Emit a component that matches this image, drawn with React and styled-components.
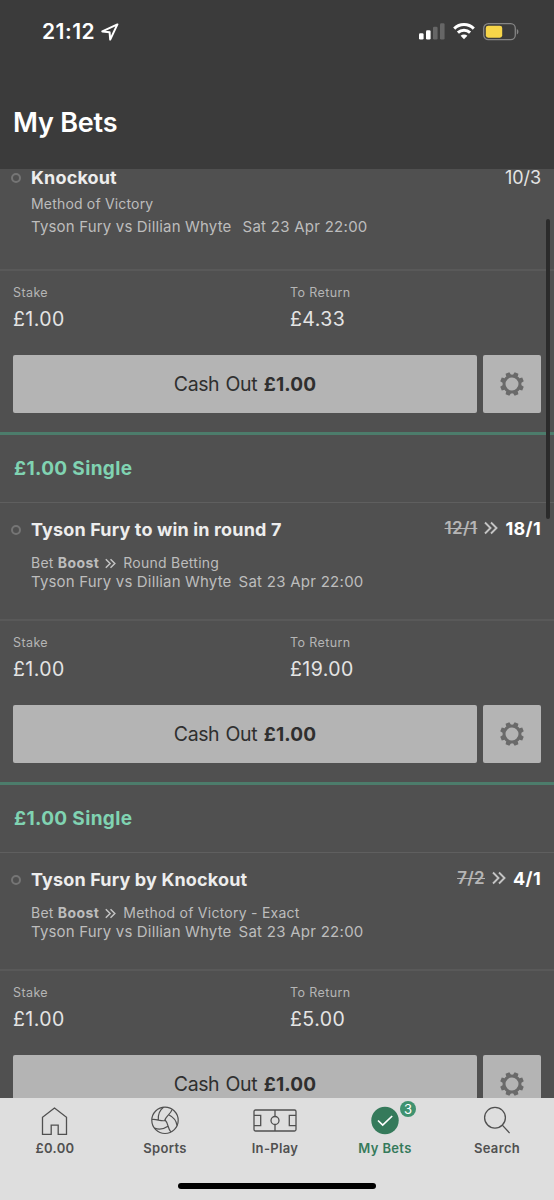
import React from 'react'
import styled, { createGlobalStyle } from 'styled-components'

const GlobalStyle = createGlobalStyle`
  * {
    box-sizing: border-box;
  }
  body {
    margin: 0;
    background: #505050;
    font-family: Inter, 'Liberation Sans', sans-serif;
  }
  button {
    font-family: inherit;
    border: none;
    padding: 0;
  }
`

const Screen = styled.div`
  position: relative;
  display: flex;
  flex-direction: column;
  width: 554px;
  height: 1200px;
  overflow: hidden;
`

const Header = styled.header`
  flex: none;
  height: 169px;
  background: #3b3b3b;
  color: #fff;
`

const StatusBar = styled.div`
  display: flex;
  align-items: center;
  justify-content: space-between;
  height: 63px;
  padding: 0 35px 0 42px;
`

const Clock = styled.div`
  display: flex;
  align-items: center;
  gap: 6px;
  font-size: 21px;
  font-weight: 600;
  letter-spacing: 0.5px;
`

const StatusIcons = styled.div`
  display: flex;
  align-items: center;
  gap: 8px;
`

const PageTitle = styled.h1`
  margin: 43px 0 0 13px;
  font-size: 27px;
  line-height: 34px;
  font-weight: 600;
  letter-spacing: -0.2px;
`

const BetList = styled.main`
  flex: 1;
  min-height: 0;
  overflow: hidden;
  background: #505050;
`

const Card = styled.section`
  padding-bottom: 19px;
  border-bottom: 3px solid #4c7c6b;
`

const CardTitle = styled.h2`
  margin: 0;
  height: 68px;
  padding-left: 14px;
  border-bottom: 1px solid #5f5f5f;
  color: #80d3b2;
  font-size: 19px;
  line-height: 67px;
  font-weight: 650;
  letter-spacing: 0.35px;
`

const Selection = styled.div`
  display: flex;
  height: ${(p) => (p.$clipped ? 102 : 118)}px;
  padding: ${(p) => (p.$clipped ? '0' : '18px')} 13px 0 11px;
  border-bottom: 2px solid #595959;
`

const Bullet = styled.span`
  flex: none;
  width: 10px;
  height: 10px;
  margin: 4px 10px 0 0;
  border: 2px solid #757575;
  border-radius: 50%;
`

const Details = styled.div`
  flex: 1;
  color: #bdbdbd;
`

const Name = styled.div`
  color: #ededed;
  font-size: 18px;
  line-height: 18px;
  font-weight: 680;
  letter-spacing: 0.15px;
`

const Market = styled.div`
  display: flex;
  align-items: center;
  margin-top: ${(p) => (p.$clipped ? 7 : 14)}px;
  font-size: 14px;
  line-height: 20px;
  letter-spacing: ${(p) => (p.$clipped ? 0.18 : 0.25)}px;
  white-space: pre;

  svg {
    margin: 0 7px 0 6px;
  }

  b {
    letter-spacing: 0.4px;
  }
`

const Fixture = styled.div`
  display: flex;
  gap: ${(p) => (p.$clipped ? 11 : 7)}px;
  margin-top: ${(p) => (p.$clipped ? 3 : -1)}px;
  font-size: 15px;
  line-height: 20px;
  letter-spacing: 0.17px;

  span + span {
    letter-spacing: 0.27px;
  }
`

const Odds = styled.div`
  display: flex;
  align-items: center;
  height: 18px;
  margin-top: ${(p) => (p.$boosted ? -2 : -1)}px;
  gap: 7px;
  color: ${(p) => (p.$boosted ? '#fff' : '#e4e4e4')};
  font-size: 18px;
  font-weight: ${(p) => (p.$boosted ? 700 : 400)};
  letter-spacing: ${(p) => (p.$boosted ? 0.35 : -0.1)}px;
`

const OldOdds = styled.s`
  color: #b5b5b5;
  font-size: 17px;
  font-weight: 600;
  text-decoration-thickness: 1px;
`

const Totals = styled.dl`
  display: grid;
  grid-template-columns: 1fr 1fr;
  height: 84px;
  margin: 0;
  padding: 13px 0 0 13px;
  column-gap: 13px;
`

const Label = styled.dt`
  color: #b5b5b5;
  font-size: 12.5px;
  line-height: 18px;
  letter-spacing: 0.4px;
`

const Amount = styled.dd`
  margin: 6px 0 0;
  color: #e4e4e4;
  font-size: 19.5px;
  line-height: 22px;
  letter-spacing: 0.45px;
`

const Actions = styled.div`
  display: flex;
  gap: 6px;
  padding: 0 13px;
`

const CashOut = styled.button`
  flex: 1;
  height: 58px;
  border-radius: 2px;
  background: #b4b4b4;
  color: #2f2f2f;
  font-size: 19.5px;
  letter-spacing: -0.45px;
  word-spacing: 1.5px;

  b {
    font-size: 19px;
    font-weight: 680;
    letter-spacing: 0.15px;
  }
`

const Settings = styled.button`
  display: grid;
  place-items: center;
  width: 58px;
  height: 58px;
  border-radius: 2px;
  background: #b4b4b4;
`

const ScrollThumb = styled.div`
  position: absolute;
  top: 219px;
  right: 4px;
  width: 4px;
  height: 300px;
  border-radius: 2px;
  background: #2b2b2b;
`

const TabBar = styled.nav`
  flex: none;
  height: 102px;
  background: #dedede;
`

const Tabs = styled.div`
  display: grid;
  grid-template-columns: repeat(4, 110px) 1fr;
  height: 88px;
`

const Tab = styled.div`
  display: flex;
  flex-direction: column;
  align-items: center;
  padding-top: 7px;
  color: ${(p) => (p.$active ? '#357a5b' : '#505050')};
  font-size: 13px;
  font-weight: 600;
  line-height: 18px;
  letter-spacing: 0.35px;
`

const TabIcon = styled.span`
  position: relative;
  display: grid;
  place-items: center;
  height: 30px;
  margin-bottom: 4px;
`

const Badge = styled.span`
  position: absolute;
  top: -4px;
  left: 29px;
  width: 16px;
  height: 16px;
  border-radius: 50%;
  background: #3f9270;
  color: #fff;
  font-size: 13px;
  font-weight: 400;
  line-height: 16px;
  letter-spacing: 0;
  text-align: center;
`

const HomeIndicator = styled.div`
  width: 198px;
  height: 6px;
  margin: -3px auto 0;
  border-radius: 3px;
  background: #000;
`

const LocationIcon = () => (
  <svg width="18" height="18" viewBox="0 0 18 18" fill="none" stroke="#fff" strokeWidth="2" strokeLinejoin="round">
    <path d="M16.4 1.4 1.3 8.4l7.3.9.6 7.3z" />
  </svg>
)

const SignalIcon = () => (
  <svg width="26" height="17" viewBox="0 0 26 17">
    <rect x="0" y="10.3" width="4.6" height="6.2" rx="1.3" fill="#fff" />
    <rect x="7" y="7.2" width="4.6" height="9.3" rx="1.3" fill="#fff" />
    <rect x="14" y="3.8" width="4.6" height="12.7" rx="1.3" fill="#666" />
    <rect x="21" y="0.2" width="4.6" height="16.3" rx="1.3" fill="#666" />
  </svg>
)

const WifiIcon = () => (
  <svg width="22" height="17" viewBox="0 0 22 17" fill="none" stroke="#fff" strokeWidth="3">
    <path d="M1.2 5.6a14 14 0 0 1 19.6 0" />
    <path d="M4.9 9.6a8.8 8.8 0 0 1 12.2 0" />
    <path d="M7.6 12.8a4.9 4.9 0 0 1 6.8 0L11 16.2z" fill="#fff" stroke="none" />
  </svg>
)

const BatteryIcon = () => (
  <svg width="36" height="18" viewBox="0 0 36 18">
    <rect x="0.7" y="0.7" width="31.6" height="16" rx="4.6" fill="none" stroke="#858585" strokeWidth="1.3" />
    <rect x="2.8" y="2.7" width="16.4" height="12" rx="2.4" fill="#f7d649" />
    <path d="M33.8 6v5.4c1-.4 1.6-1.4 1.6-2.7s-.6-2.3-1.6-2.7z" fill="#858585" />
  </svg>
)

const Chevrons = ({ size = 14, width = 1.9 }) => (
  <svg width={size} height={size} viewBox="0 0 14 14" fill="none" stroke="#c4c4c4" strokeWidth={width}>
    <path d="M1 1.5l5.5 5.5L1 12.5M7 1.5l5.5 5.5L7 12.5" />
  </svg>
)

const GearIcon = () => (
  <svg width="24" height="24" viewBox="-12 -12 24 24" fill="none" stroke="#6a6a6a">
    <circle r="8" strokeWidth="3" />
    {[22.5, 67.5, 112.5, 157.5, 202.5, 247.5, 292.5, 337.5].map((a) => (
      <path key={a} d="M-2.6-8.8L-2-11.9H2L2.6-8.8z" fill="#6a6a6a" stroke="none" transform={`rotate(${a})`} />
    ))}
  </svg>
)

const HomeIcon = () => (
  <svg width="28" height="30" viewBox="0 0 28 30" fill="none" stroke="#505050" strokeWidth="1.3">
    <path d="M13.5 3 1.5 12.3V29.5H10.2V20.2H17.2V29.5H25.5V12.3z" />
  </svg>
)

const BallIcon = () => (
  <svg width="28" height="30" viewBox="-14 -15.3 28 30" fill="none" stroke="#505050" strokeWidth="1.2">
    <circle r="13.2" />
    {[0, 120, 240].map((a) => (
      <path key={a} d="M.5.2C-4 1.5-8.5-1.8-13-.8M-6.7-.4C-7-5-5.5-10-1.5-13" transform={`rotate(${a})`} />
    ))}
  </svg>
)

const PitchIcon = () => (
  <svg width="44" height="30" viewBox="0 0 44 30" fill="none" stroke="#505050" strokeWidth="1.3">
    <rect x="1" y="5" width="42" height="21" rx="1.5" />
    <path d="M22 5v6.5M22 19.5V26M1 10.3h6.7v10.4H1M43 10.3h-6.7v10.4H43" />
    <circle cx="22" cy="15.5" r="4" />
  </svg>
)

const CheckIcon = () => (
  <svg width="28" height="30" viewBox="0 0 28 30">
    <circle cx="14" cy="15.5" r="13.7" fill="#357a5b" />
    <path d="M7 15.5l4.7 4.5 9.5-9" fill="none" stroke="#fff" strokeWidth="1.7" />
  </svg>
)

const SearchIcon = () => (
  <svg width="28" height="30" viewBox="0 0 28 30" fill="none" stroke="#505050" strokeWidth="1.3">
    <circle cx="12" cy="12.7" r="10.4" />
    <path d="M19.3 20.1l7.3 8" />
  </svg>
)

const bets = [
  { name: 'Knockout', market: 'Method of Victory', odds: '10/3', returns: '£4.33', clipped: true },
  { name: 'Tyson Fury to win in round 7', market: 'Round Betting', oldOdds: '12/1', odds: '18/1', returns: '£19.00' },
  { name: 'Tyson Fury by Knockout', market: 'Method of Victory - Exact', oldOdds: '7/2', odds: '4/1', returns: '£5.00' },
]

const BetCard = ({ bet }) => (
  <Card>
    {!bet.clipped && <CardTitle>£1.00 Single</CardTitle>}
    <Selection $clipped={bet.clipped}>
      <Bullet />
      <Details>
        <Name>{bet.name}</Name>
        <Market $clipped={bet.clipped}>
          {bet.oldOdds && (
            <>
              Bet <b>Boost</b>
              <Chevrons size={11} />
            </>
          )}
          {bet.market}
        </Market>
        <Fixture $clipped={bet.clipped}>
          <span>Tyson Fury vs Dillian Whyte</span>
          <span>Sat 23 Apr 22:00</span>
        </Fixture>
      </Details>
      <Odds $boosted={!!bet.oldOdds}>
        {bet.oldOdds && (
          <>
            <OldOdds>{bet.oldOdds}</OldOdds>
            <Chevrons />
          </>
        )}
        {bet.odds}
      </Odds>
    </Selection>
    <Totals>
      <div>
        <Label>Stake</Label>
        <Amount>£1.00</Amount>
      </div>
      <div>
        <Label>To Return</Label>
        <Amount>{bet.returns}</Amount>
      </div>
    </Totals>
    <Actions>
      <CashOut>
        Cash Out <b>£1.00</b>
      </CashOut>
      <Settings aria-label="Settings">
        <GearIcon />
      </Settings>
    </Actions>
  </Card>
)

const App = () => {
  return (
    <Screen>
      <GlobalStyle />
      <Header>
        <StatusBar>
          <Clock>
            21:12
            <LocationIcon />
          </Clock>
          <StatusIcons>
            <SignalIcon />
            <WifiIcon />
            <BatteryIcon />
          </StatusIcons>
        </StatusBar>
        <PageTitle>My Bets</PageTitle>
      </Header>
      <BetList>
        {bets.map((bet) => (
          <BetCard key={bet.name} bet={bet} />
        ))}
      </BetList>
      <ScrollThumb />
      <TabBar>
        <Tabs>
          <Tab>
            <TabIcon><HomeIcon /></TabIcon>
            £0.00
          </Tab>
          <Tab>
            <TabIcon><BallIcon /></TabIcon>
            Sports
          </Tab>
          <Tab>
            <TabIcon><PitchIcon /></TabIcon>
            In-Play
          </Tab>
          <Tab $active>
            <TabIcon>
              <CheckIcon />
              <Badge>3</Badge>
            </TabIcon>
            My Bets
          </Tab>
          <Tab>
            <TabIcon><SearchIcon /></TabIcon>
            Search
          </Tab>
        </Tabs>
        <HomeIndicator />
      </TabBar>
    </Screen>
  )
}

export default App
